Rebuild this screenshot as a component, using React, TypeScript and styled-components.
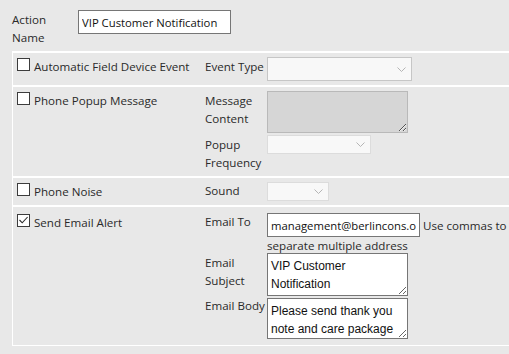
import React from "react"
import styled, { createGlobalStyle } from "styled-components"

const GlobalStyle = createGlobalStyle`
  html, body {
    margin: 0;
    background: #e8e8e8;
  }
  body {
    font-family: "Open Sans", "Noto Sans", sans-serif;
    font-size: 11.6px;
    color: #2a2a2a;
  }
`

const Page = styled.div`
  padding: 10px 0 9px 12px;
`

const Header = styled.div`
  display: flex;
  align-items: flex-start;
`

const HeaderLabel = styled.div`
  width: 66px;
  line-height: 18px;
  padding-top: 1px;
`

const TextInput = styled.input<{ $width: number }>`
  box-sizing: border-box;
  width: ${(p) => p.$width}px;
  height: 24px;
  margin: 0;
  padding: 0 3px;
  border: 1px solid #767676;
  background: #fff;
  font-family: inherit;
  font-size: 11.3px;
  color: #111;
  outline: none;
  vertical-align: baseline;
`

const Table = styled.div`
  margin-top: 4px;
  border-left: 1px solid #fff;
  border-bottom: 1px solid #fff;
`

const Row = styled.div<{ $pt: number; $pb: number }>`
  display: flex;
  align-items: flex-start;
  border-top: 2px solid #fff;
  padding: ${(p) => p.$pt}px 0 ${(p) => p.$pb}px;
`

const Option = styled.div`
  width: 192px;
  flex: none;
  display: flex;
  align-items: flex-start;
  line-height: 18px;
  padding-top: 1px;
`

const Box = styled.span`
  box-sizing: border-box;
  width: 13px;
  height: 13px;
  margin: 0 4px 0 4px;
  flex: none;
  border: 1px solid #3c3c3c;
  background: #fff;
  display: flex;
`

const Fields = styled.div<{ $gap: number }>`
  display: grid;
  grid-template-columns: 62px 242px;
  row-gap: ${(p) => p.$gap}px;
  align-items: start;
`

const FieldLabel = styled.div<{ $pt?: number }>`
  line-height: 18px;
  padding-top: ${(p) => p.$pt ?? 1}px;
  white-space: nowrap;
`

const Control = styled.div`
  line-height: 17px;
  margin-bottom: -1px;
`

const SelectBox = styled.div<{ $width: number; $height: number; $border: string }>`
  box-sizing: border-box;
  width: ${(p) => p.$width}px;
  height: ${(p) => p.$height}px;
  border: 1px solid ${(p) => p.$border};
  background: #f8f8f8;
  display: flex;
  align-items: center;
  justify-content: flex-end;
  padding-right: 5px;
`

const TextArea = styled.textarea<{ $height: number; $disabled?: boolean; $mt?: number }>`
  display: block;
  box-sizing: border-box;
  width: 141px;
  height: ${(p) => p.$height}px;
  margin: ${(p) => p.$mt ?? 0}px 0 0;
  padding: 3px;
  border: 1px solid ${(p) => (p.$disabled ? "#b9b9b9" : "#767676")};
  background: ${(p) => (p.$disabled ? "#d6d6d6" : "#fff")};
  font-family: "Liberation Sans", Arial, sans-serif;
  font-size: 12px;
  line-height: 18px;
  color: #111;
  overflow: hidden;
  outline: none;
`

const Chevron = () => (
  <svg width="9" height="5" viewBox="0 0 9 5">
    <path d="M0.5 0.5 L4.5 4.5 L8.5 0.5" fill="none" stroke="#b5b5b5" strokeWidth="1" />
  </svg>
)

const Check = ({ checked }: { checked?: boolean }) => (
  <Box>
    {checked && (
      <svg width="11" height="11" viewBox="0 0 11 11">
        <path d="M1.5 5 L4.2 7.8 L9.6 2" fill="none" stroke="#2a2a2a" strokeWidth="1.1" />
      </svg>
    )}
  </Box>
)

const Select = ({ width, height, border }: { width: number; height: number; border: string }) => (
  <SelectBox $width={width} $height={height} $border={border}>
    <Chevron />
  </SelectBox>
)

const App = () => {
  return (
    <Page>
      <GlobalStyle />
      <Header>
        <HeaderLabel>
          Action
          <br />
          Name
        </HeaderLabel>
        <TextInput $width={153} defaultValue="VIP Customer Notification" />
      </Header>
      <Table>
        <Row $pt={4} $pb={4}>
          <Option>
            <Check />
            Automatic Field Device Event
          </Option>
          <Fields $gap={2}>
            <FieldLabel>Event Type</FieldLabel>
            <Select width={145} height={24} border="#c6c6c6" />
          </Fields>
        </Row>
        <Row $pt={4} $pb={4}>
          <Option>
            <Check />
            Phone Popup Message
          </Option>
          <Fields $gap={2}>
            <FieldLabel>
              Message
              <br />
              Content
            </FieldLabel>
            <TextArea $height={42} $disabled disabled />
            <FieldLabel>
              Popup
              <br />
              Frequency
            </FieldLabel>
            <Select width={104} height={19} border="#dcdcdc" />
          </Fields>
        </Row>
        <Row $pt={4} $pb={4}>
          <Option>
            <Check />
            Phone Noise
          </Option>
          <Fields $gap={2}>
            <FieldLabel $pt={0}>Sound</FieldLabel>
            <Select width={62} height={19} border="#dcdcdc" />
          </Fields>
        </Row>
        <Row $pt={6} $pb={6}>
          <Option>
            <Check checked />
            Send Email Alert
          </Option>
          <Fields $gap={0}>
            <FieldLabel $pt={0}>Email To</FieldLabel>
            <Control>
              <TextInput $width={153} defaultValue="management@berlincons.org" /> Use commas to separate
              multiple address
            </Control>
            <FieldLabel>
              Email
              <br />
              Subject
            </FieldLabel>
            <TextArea $height={43} defaultValue="VIP Customer Notification" />
            <FieldLabel>Email Body</FieldLabel>
            <TextArea $height={41} $mt={2} defaultValue="Please send thank you note and care package" />
          </Fields>
        </Row>
      </Table>
    </Page>
  )
}

export default App
